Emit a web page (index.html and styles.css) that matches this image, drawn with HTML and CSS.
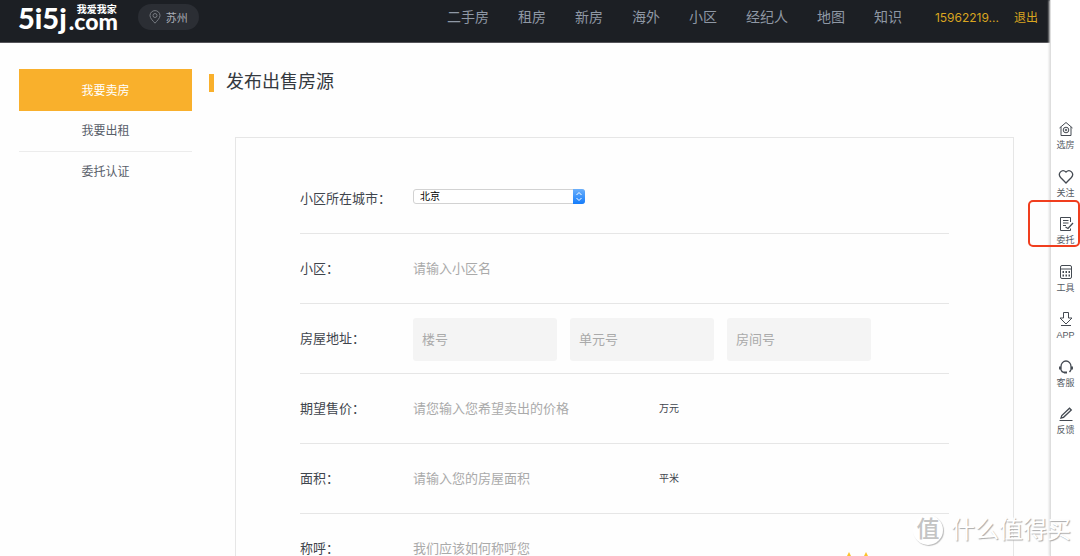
FILE: index.html
```html
<!DOCTYPE html>
<html lang="zh-CN">
<head>
<meta charset="utf-8">
<title>发布出售房源</title>
<link rel="stylesheet" href="styles.css">
</head>
<body>
<div class="page">
  <div class="site">
    <header class="header">
      <a class="logo" href="#">
        <span class="logo-main">5i5j</span>
        <span class="logo-side"><span class="logo-cn">我爱我家</span><span class="logo-com">.com</span></span>
      </a>
      <button class="city" type="button">
        <svg class="pin" viewBox="0 0 12 14"><path d="M6 13.2C3.6 10.6 1 8 1 5.6a5 5 0 0 1 10 0C11 8 8.400 10.600 6 13.200z"/><circle cx="6" cy="5.500" r="2"/></svg>
        苏州
      </button>
      <nav class="nav">
        <a href="#">二手房</a><a href="#">租房</a><a href="#">新房</a><a href="#">海外</a><a href="#">小区</a><a href="#">经纪人</a><a href="#">地图</a><a href="#">知识</a>
      </nav>
      <div class="account"><a href="#">15962219...</a><a href="#">退出</a></div>
    </header>
    <div class="content">
      <nav class="menu">
        <a class="menu-item active" href="#">我要卖房</a>
        <a class="menu-item" href="#">我要出租</a>
        <a class="menu-item" href="#">委托认证</a>
      </nav>
      <main class="main">
        <h1 class="title">发布出售房源</h1>
        <form class="panel">
          <div class="row">
            <label class="label" for="city">小区所在城市：</label>
            <span class="select-box">
              <select class="select" id="city"><option>北京</option></select>
              <svg class="stepper" viewBox="0 0 12 15"><path d="M3.500 6L6 3.500 8.500 6M3.500 9L6 11.500 8.500 9"/></svg>
            </span>
          </div>
          <div class="row">
            <label class="label" for="estate">小区：</label>
            <input class="input" id="estate" type="text" placeholder="请输入小区名">
          </div>
          <div class="row">
            <label class="label" for="building">房屋地址：</label>
            <div class="boxes">
              <input class="box" id="building" type="text" placeholder="楼号">
              <input class="box" type="text" placeholder="单元号" aria-label="单元号">
              <input class="box" type="text" placeholder="房间号" aria-label="房间号">
            </div>
          </div>
          <div class="row">
            <label class="label" for="price">期望售价：</label>
            <input class="input" id="price" type="text" placeholder="请您输入您希望卖出的价格">
            <span class="unit">万元</span>
          </div>
          <div class="row">
            <label class="label" for="area">面积：</label>
            <input class="input" id="area" type="text" placeholder="请输入您的房屋面积">
            <span class="unit">平米</span>
          </div>
          <div class="row">
            <label class="label" for="name">称呼：</label>
            <input class="input" id="name" type="text" placeholder="我们应该如何称呼您">
          </div>
        </form>
      </main>
    </div>
  </div>
  <aside class="tools">
    <div class="tool-list">
      <a class="tool" href="#"><svg viewBox="0 0 16 16"><path d="M1.500 7L8 1.500 14.500 7M3 6v8.500h10V6"/><circle cx="8" cy="9" r="2.800"/><circle cx="8" cy="9" r=".8"/></svg>选房</a>
      <a class="tool" href="#"><svg viewBox="0 0 16 16"><path class="thick" d="M8 14L2.600 8.500C-.8 4.500 4-.7 8 3 12-.7 16.800 4.500 13.400 8.500z"/></svg>关注</a>
      <a class="tool marked" href="#"><svg viewBox="0 0 16 16"><path d="M12.500 6V1.500h-10v13h10V12.500M5 4.500h5.500M5 7h5.500M5 9.500h3"/><path class="thick" d="M7.500 11l2.500 1.500 5-5.500"/></svg>委托</a>
      <a class="tool" href="#"><svg viewBox="0 0 16 16"><rect x="2.500" y="1.500" width="11" height="13" rx="1.500"/><path d="M2.500 5h11"/><path class="dots" d="M4.500 8h7.500M4.500 11.500h7.500"/></svg>工具</a>
      <a class="tool" href="#"><svg viewBox="0 0 16 16"><path d="M5.500 1.500h5v5.500H14l-6 6-6-6h3.500zM3 14.500h10"/></svg>APP</a>
      <a class="tool" href="#"><svg viewBox="0 0 16 16"><path class="thick" d="M3 11V7.500a5 5.500 0 0 1 10 0V11M1.700 7.500v3M14.300 7.500v3M3 11c.5 1.500 1.500 2.200 3 2.500M13 11l-1.500 2"/><path class="heavy" d="M6 13.500h3"/></svg>客服</a>
      <a class="tool" href="#"><svg viewBox="0 0 16 16"><path class="thick" d="M3 12l.8-2.500L11.500 2.200l1.800 1.800L5.500 11.300z"/><path d="M1.500 14.500h13"/></svg>反馈</a>
    </div>
  </aside>
  <svg class="crown" viewBox="0 0 24 4"><path d="M2 4l2-4 2 4zM19 4l2-4 2 4z"/></svg>
  <div class="watermark"><span class="seal">值</span><span>什么值得买</span></div>
</div>
</body>
</html>
```

FILE: styles.css
```css
*, *::before { box-sizing: border-box; }

body {
  margin: 0;
  background: #fefefe;
  color: #3f454d;
  font-family: "Liberation Sans", "Noto Sans CJK SC", sans-serif;
  font-size: 13px;
}

a { color: inherit; text-decoration: none; }

.page {
  position: relative;
  display: flex;
  height: 100vh;
  overflow: hidden;
}

.site { flex: 1; min-width: 0; }

.header {
  display: flex;
  align-items: flex-start;
  height: 43px;
  padding: 0 12px 0 18px;
  background: #1c1f24;
  border-bottom: 1px solid #55555a;
  line-height: 35px;
}

.logo {
  display: flex;
  gap: 2px;
  color: #fff;
  font-family: Lato, "Noto Sans CJK SC", sans-serif;
  font-weight: 900;
}
.logo-main { font-size: 29px; line-height: 35px; }
.logo-side { display: flex; flex-direction: column; padding-top: 2px; }
.logo-cn {
  padding-left: 8px;
  font-family: "Noto Sans CJK SC", sans-serif;
  font-size: 10px;
  font-weight: 700;
  line-height: 14px;
  white-space: nowrap;
}
.logo-com { font-size: 23px; line-height: 10px; font-weight: 900; }

.city {
  display: flex;
  align-items: center;
  gap: 5px;
  height: 26px;
  margin: 4px 0 0 20px;
  padding: 0 11px;
  border: 0;
  border-radius: 13px;
  background: #2b2e34;
  color: #a9adb5;
  font-family: inherit;
  font-size: 11px;
}
.pin { width: 12px; height: 14px; fill: none; stroke: #777b82; }

.nav { display: flex; gap: 29px; margin-left: auto; color: #8f98a5; font-size: 14px; }

.account {
  display: flex;
  gap: 15px;
  margin-left: 33px;
  color: #d9a520;
  font-family: Inter, "Noto Sans CJK SC", sans-serif;
  font-size: 12px;
}

.content { display: flex; gap: 17px; padding: 26px 36px 0 19px; }

.menu { width: 173px; color: #59606a; font-size: 12px; text-align: center; }
.menu-item { display: block; line-height: 40px; border-bottom: 1px solid #ececec; }
.menu-item.active { padding-top: 2px; background: #f9b02c; color: #fff; border: 0; }
.menu-item:last-child { border-bottom: 0; }

.main { flex: 1; min-width: 0; }

.title {
  display: flex;
  align-items: center;
  gap: 12px;
  margin: 0;
  color: #34393f;
  font-size: 18px;
  font-weight: 400;
  line-height: 27px;
}
.title::before { content: ""; width: 5px; height: 18px; background: #f9b02c; }

.panel {
  margin: 41px 0 0 26px;
  padding: 26px 64px;
  border: 1px solid #e6e6e6;
}

.row { display: flex; align-items: center; height: 70px; border-bottom: 1px solid #e6e6e6; }
.label { width: 113px; flex: none; padding-bottom: 3px; white-space: nowrap; }

.select-box { position: relative; display: flex; width: 172px; margin-bottom: 5px; }
.select {
  width: 100%;
  height: 15px;
  padding: 0 18px 0 6px;
  appearance: none;
  border: 1px solid #d2d2d2;
  border-radius: 3px;
  background: #fff;
  color: #000;
  font-family: inherit;
  font-size: 10px;
  line-height: 13px;
}
.stepper {
  position: absolute;
  top: 0;
  right: 0;
  width: 12px;
  height: 15px;
  border-radius: 0 3px 3px 0;
  background: linear-gradient(#6bb0fb, #157cfb);
  fill: none;
  stroke: #fff;
  pointer-events: none;
}

.input {
  width: 246px;
  height: 42px;
  padding: 0;
  border: 0;
  background: transparent;
  font-family: inherit;
  font-size: 13px;
}
.input::placeholder, .box::placeholder { color: #aaa; opacity: 1; }
.unit { padding-bottom: 2px; font-size: 10px; }

.boxes { display: flex; gap: 13px; padding-top: 2px; }
.box {
  width: 144px;
  height: 43px;
  padding: 0 9px;
  border: 0;
  border-radius: 3px;
  background: #f4f4f4;
  font-family: inherit;
  font-size: 13px;
}

.tools {
  width: 30px;
  padding-top: 121px;
  border-left: 1px solid #dedede;
  background: #fff;
  box-shadow: -1px 0 2px #ddd;
}
.tool-list {
  display: flex;
  flex-direction: column;
  justify-content: space-between;
  height: 317px;
}
.tool {
  position: relative;
  display: flex;
  flex-direction: column;
  align-items: center;
  color: #555b64;
  font-size: 9px;
  line-height: 16px;
}
.tool svg { width: 16px; height: 16px; fill: none; stroke: #444a52; }
.tool .thick { stroke-width: 1.3; }
.tool .heavy { stroke-width: 2; }
.tool .dots { stroke-width: 2; stroke-dasharray: 1.500 1.500; }

.marked::before {
  content: "";
  position: absolute;
  top: -16px;
  right: 0;
  width: 52px;
  height: 47px;
  border: 2px solid #f03e1e;
  border-radius: 5px;
}

.crown {
  position: absolute;
  right: 211px;
  bottom: 0;
  width: 24px;
  height: 4px;
  fill: #fcc32c;
}

.watermark {
  position: absolute;
  right: 9px;
  bottom: 9px;
  display: flex;
  align-items: center;
  gap: 8px;
  color: #fff;
  font-size: 24px;
  line-height: 34px;
  text-shadow: 1px 1px 1px #aaa;
}
.seal {
  width: 30px;
  height: 30px;
  border-radius: 50%;
  background: #fff;
  box-shadow: 1px 1px 1px #bbb;
  color: #c4c4c4;
  font-size: 23px;
  font-weight: 500;
  line-height: 28px;
  text-align: center;
  text-shadow: none;
}
```
